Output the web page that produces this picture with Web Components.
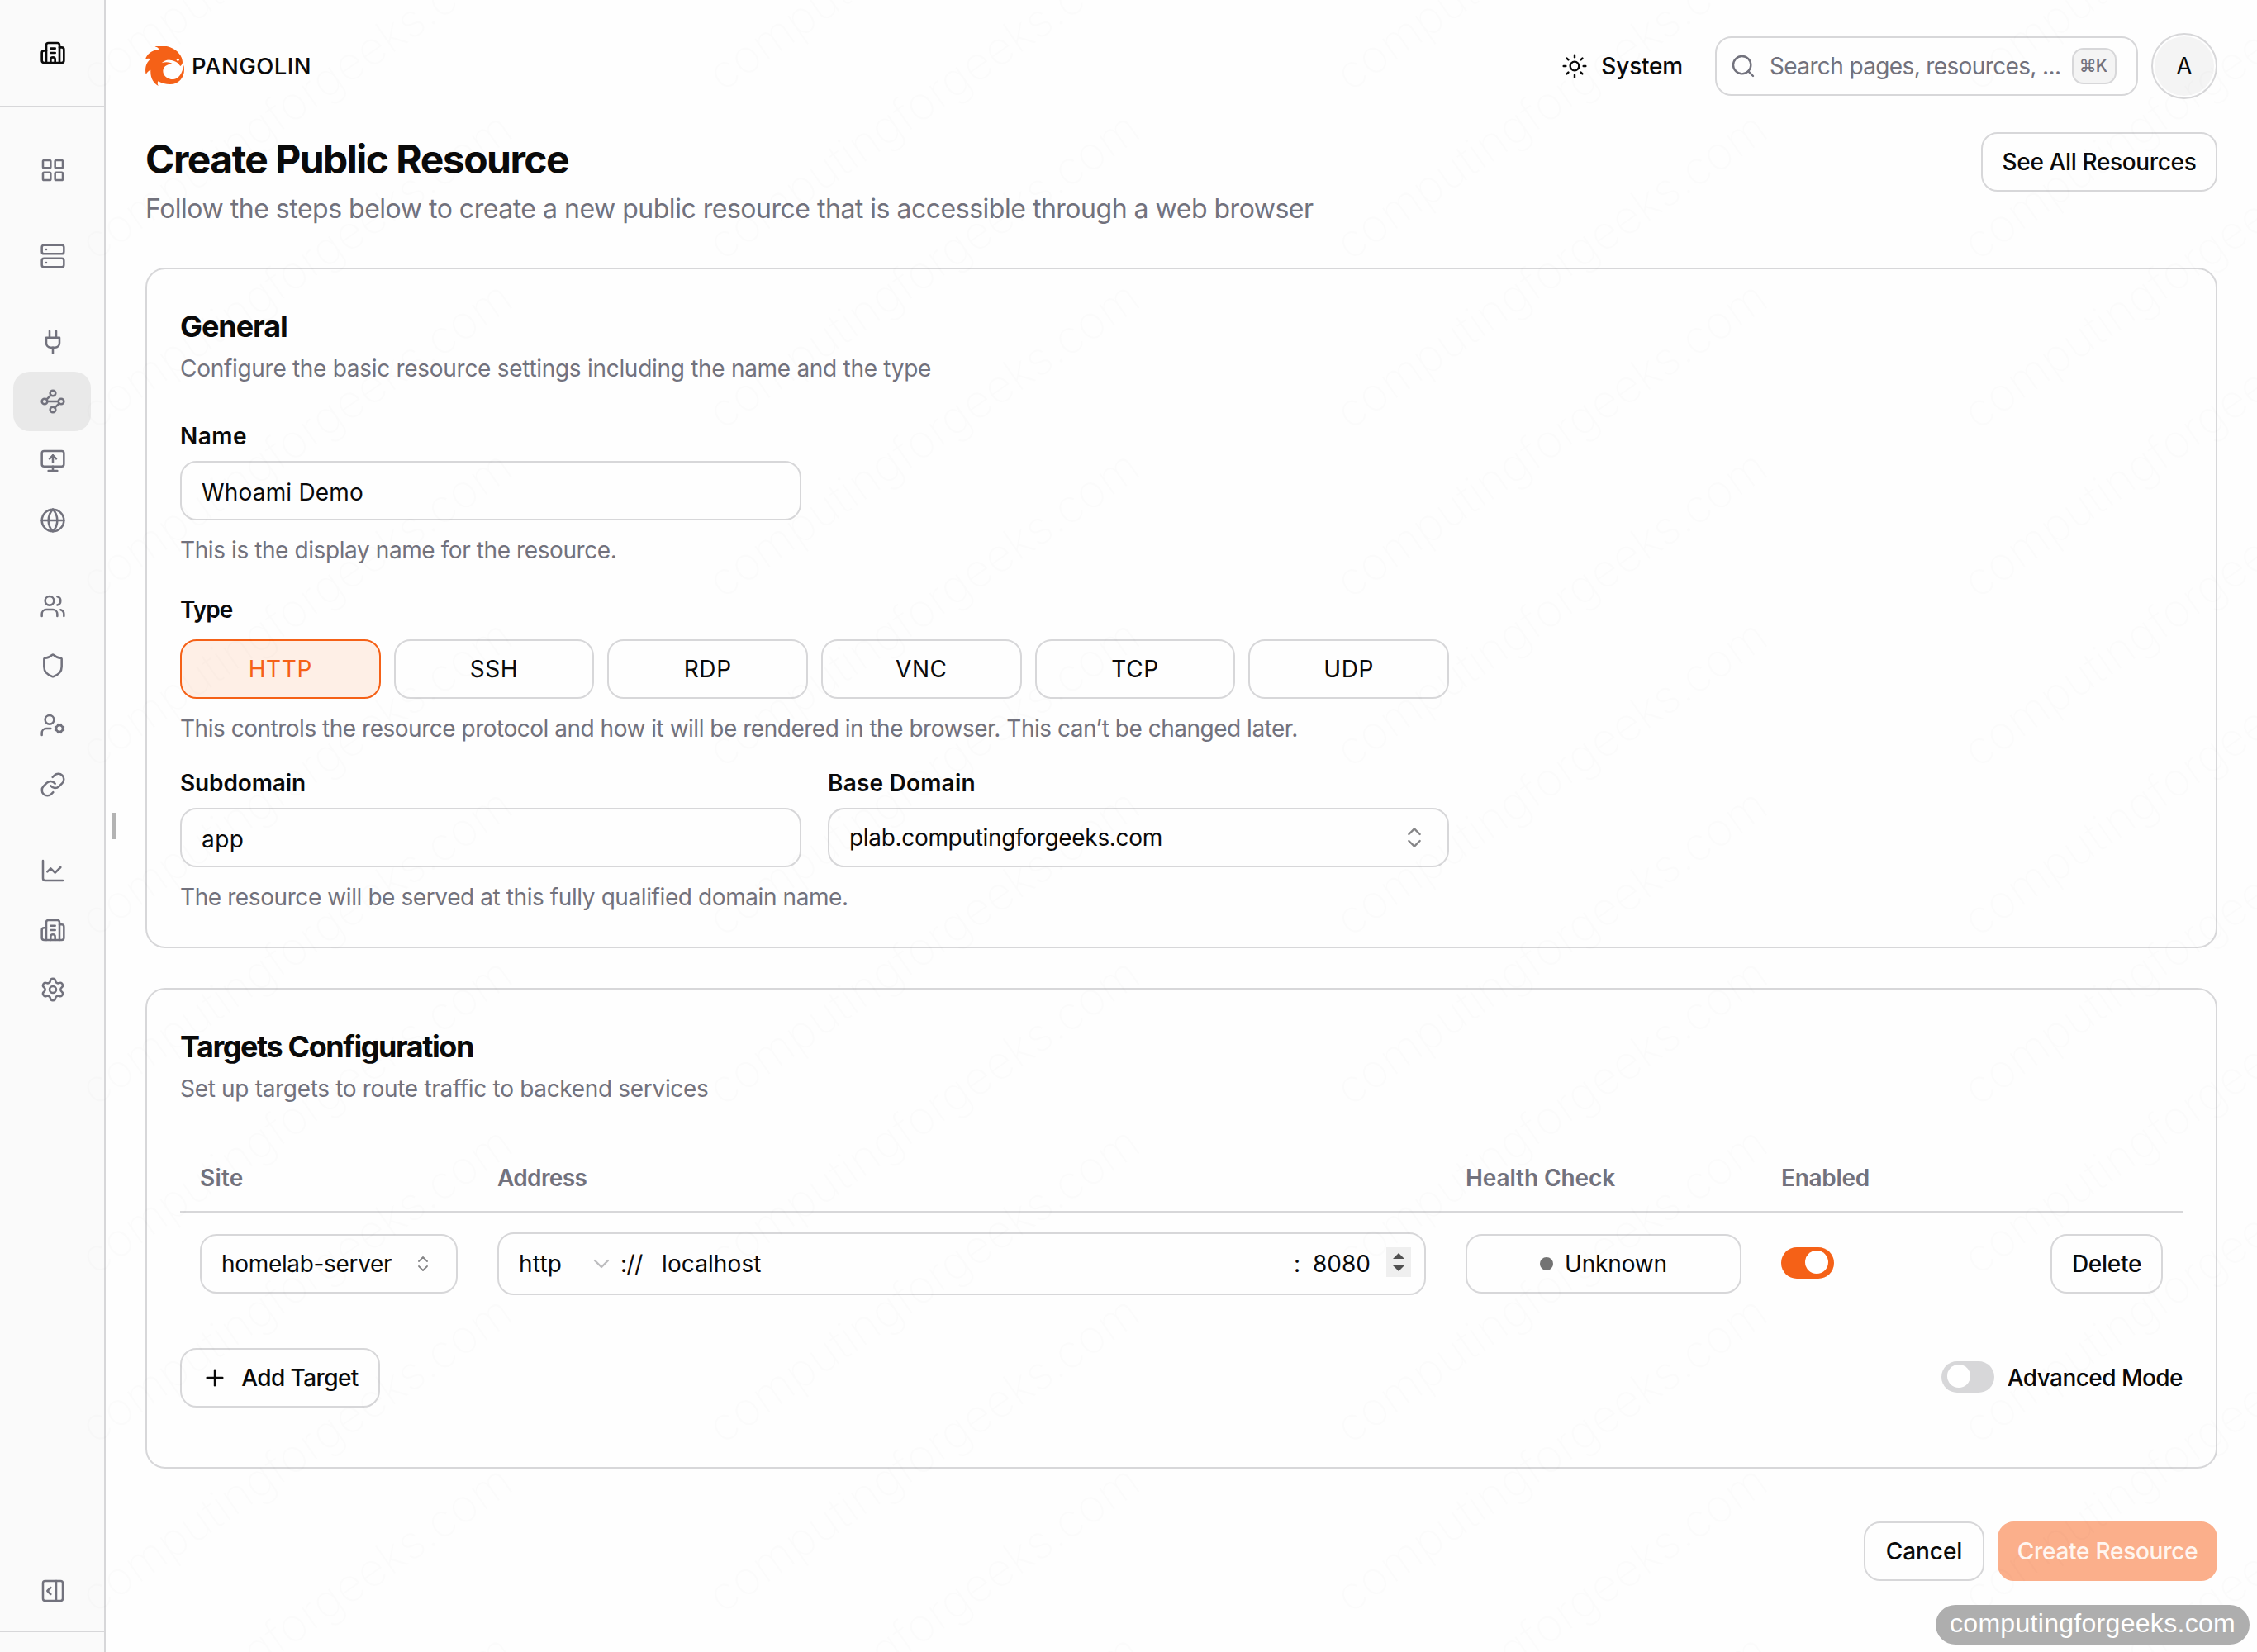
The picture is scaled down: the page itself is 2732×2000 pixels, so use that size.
<!DOCTYPE html>
<html lang="en">
<head>
<meta charset="utf-8">
<title>Pangolin - Create Public Resource</title>
<style>
  :root {
    --fg: #0a0a0a;
    --muted: #72727d;
    --line: #d7d7d9;
    --primary: #f56117;
    --bg: #fefefe;
  }
  html, body { margin: 0; }
  body {
    width: 2732px;
    height: 2000px;
    overflow: hidden;
    position: relative;
    background: var(--bg);
    color: var(--fg);
    font-family: Inter, "Liberation Sans", sans-serif;
    font-size: 28px;
  }
</style>
</head>
<body>
<app-shell></app-shell>

<script>
const ICONS = {
  building: '<path d="M10 12h4"/><path d="M10 8h4"/><path d="M14 21v-3a2 2 0 0 0-4 0v3"/><path d="M6 10H4a2 2 0 0 0-2 2v7a2 2 0 0 0 2 2h16a2 2 0 0 0 2-2V9a2 2 0 0 0-2-2h-2"/><path d="M6 21V5a2 2 0 0 1 2-2h8a2 2 0 0 1 2 2v16"/>',
  grid: '<rect width="7" height="7" x="3" y="3" rx="1"/><rect width="7" height="7" x="14" y="3" rx="1"/><rect width="7" height="7" x="14" y="14" rx="1"/><rect width="7" height="7" x="3" y="14" rx="1"/>',
  server: '<rect width="20" height="8" x="2" y="2" rx="2"/><rect width="20" height="8" x="2" y="14" rx="2"/><path d="M6 6h.01"/><path d="M6 18h.01"/>',
  plug: '<path d="M12 22v-5"/><path d="M9 8V2"/><path d="M15 8V2"/><path d="M18 8v5a4 4 0 0 1-4 4h-4a4 4 0 0 1-4-4V8Z"/>',
  waypoints: '<circle cx="12" cy="4.5" r="2.5"/><path d="m10.2 6.3-3.9 3.9"/><circle cx="4.5" cy="12" r="2.5"/><path d="M7 12h10"/><circle cx="19.5" cy="12" r="2.5"/><path d="m13.8 17.7 3.9-3.9"/><circle cx="12" cy="19.5" r="2.5"/>',
  monitorUp: '<path d="m9 10 3-3 3 3"/><path d="M12 13V7"/><rect width="20" height="14" x="2" y="3" rx="2"/><path d="M12 17v4"/><path d="M8 21h8"/>',
  globe: '<circle cx="12" cy="12" r="10"/><path d="M12 2a14.5 14.5 0 0 0 0 20 14.5 14.5 0 0 0 0-20"/><path d="M2 12h20"/>',
  users: '<path d="M16 21v-2a4 4 0 0 0-4-4H6a4 4 0 0 0-4 4v2"/><path d="M16 3.128a4 4 0 0 1 0 7.744"/><path d="M22 21v-2a4 4 0 0 0-3-3.87"/><circle cx="9" cy="7" r="4"/>',
  shield: '<path d="M20 13c0 5-3.5 7.5-7.66 8.95a1 1 0 0 1-.67-.01C7.5 20.5 4 18 4 13V6a1 1 0 0 1 1-1c2 0 4.5-1.2 6.24-2.72a1.17 1.17 0 0 1 1.52 0C14.51 3.81 17 5 19 5a1 1 0 0 1 1 1z"/>',
  userCog: '<path d="M10 15H6a4 4 0 0 0-4 4v2"/><path d="m14.305 16.53.923-.382"/><path d="m15.228 13.852-.923-.383"/><path d="m16.852 12.228-.383-.923"/><path d="m16.852 17.772-.383.924"/><path d="m19.148 12.228.383-.923"/><path d="m19.53 18.696-.382-.924"/><path d="m20.772 13.852.924-.383"/><path d="m20.772 16.148.924.383"/><circle cx="18" cy="15" r="3"/><circle cx="9" cy="7" r="4"/>',
  link: '<path d="M10 13a5 5 0 0 0 7.54.54l3-3a5 5 0 0 0-7.07-7.07l-1.72 1.71"/><path d="M14 11a5 5 0 0 0-7.54-.54l-3 3a5 5 0 0 0 7.07 7.07l1.71-1.71"/>',
  chart: '<path d="M3 3v16a2 2 0 0 0 2 2h16"/><path d="m19 9-5 5-4-4-3 3"/>',
  settings: '<path d="M9.671 4.136a2.34 2.34 0 0 1 4.659 0 2.34 2.34 0 0 0 3.319 1.915 2.34 2.34 0 0 1 2.33 4.033 2.34 2.34 0 0 0 0 3.831 2.34 2.34 0 0 1-2.33 4.033 2.34 2.34 0 0 0-3.319 1.915 2.34 2.34 0 0 1-4.659 0 2.34 2.34 0 0 0-3.32-1.915 2.34 2.34 0 0 1-2.33-4.033 2.34 2.34 0 0 0 0-3.831A2.34 2.34 0 0 1 6.35 6.051a2.34 2.34 0 0 0 3.319-1.915"/><circle cx="12" cy="12" r="3"/>',
  panel: '<rect width="18" height="18" x="3" y="3" rx="2"/><path d="M15 3v18"/><path d="m10 15-3-3 3-3"/>',
  sun: '<circle cx="12" cy="12" r="4"/><path d="M12 2v2"/><path d="M12 20v2"/><path d="m4.93 4.93 1.41 1.41"/><path d="m17.66 17.66 1.41 1.41"/><path d="M2 12h2"/><path d="M20 12h2"/><path d="m6.34 17.66-1.41 1.41"/><path d="m19.07 4.93-1.41 1.41"/>',
  search: '<circle cx="11" cy="11" r="8"/><path d="m21 21-4.34-4.34"/>',
  updown: '<path d="m7 15 5 5 5-5"/><path d="m7 9 5-5 5 5"/>',
  down: '<path d="m6 9 6 6 6-6"/>',
  plus: '<path d="M5 12h14"/><path d="M12 5v14"/>'
};

// <ui-icon name size stroke>
class UiIcon extends HTMLElement {
  connectedCallback() {
    const size = this.getAttribute("size") || 32;
    const stroke = this.getAttribute("stroke") || 1.5;
    this.attachShadow({ mode: "open" }).innerHTML = `
      <style>
        :host { display: block; flex: none; width: ${size}px; height: ${size}px; }
        svg { display: block; }
      </style>
      <svg width="${size}" height="${size}" viewBox="0 0 24 24" fill="none" stroke="currentColor"
        stroke-width="${stroke}" stroke-linecap="round" stroke-linejoin="round">${ICONS[this.getAttribute("name")]}</svg>
    `;
  }
}
customElements.define("ui-icon", UiIcon);

// <ui-text size weight line track muted>
class UiText extends HTMLElement {
  connectedCallback() {
    const size = this.getAttribute("size") || 28;
    const weight = this.getAttribute("weight") || 400;
    const line = this.getAttribute("line") || 40;
    const track = this.getAttribute("track") || 0;
    this.attachShadow({ mode: "open" }).innerHTML = `
      <style>
        :host {
          display: block;
          white-space: nowrap;
          font-size: ${size}px;
          font-weight: ${weight};
          line-height: ${line}px;
          letter-spacing: ${track}px;
        }
        :host([muted]) { color: var(--muted); }
      </style>
      <slot></slot>
    `;
  }
}
customElements.define("ui-text", UiText);

// outlined box used by buttons, inputs and selects
class UiBox extends HTMLElement {
  connectedCallback() {
    const width = this.getAttribute("width");
    const chevron = this.getAttribute("chevron") || 32;
    this.attachShadow({ mode: "open" }).innerHTML = `
      <style>
        :host {
          display: flex;
          align-items: center;
          box-sizing: border-box;
          width: ${width ? width + "px" : "auto"};
          height: 72px;
          padding: 0 24px;
          border: 2px solid var(--line);
          border-radius: 20px;
        }
        :host([kind="button"]) { justify-content: center; gap: 16px; padding: 0; }
        :host([kind="select"]) { justify-content: space-between; }
        :host([kind="select"][chevron]) { padding-right: 28px; }
        :host([kind="input"]) { padding-top: 3px; }
        :host([active]) { color: var(--primary); border-color: var(--primary); background: #feefe6; }
        :host([primary]) { color: #fff6f0; border-color: #fbaf8b; background: #fbaf8b; }
        ui-icon { color: #858587; }
      </style>
      <slot></slot>
      ${this.getAttribute("kind") === "select" ? `<ui-icon name="updown" size="${chevron}" stroke="1.8"></ui-icon>` : ""}
    `;
  }
}
customElements.define("ui-box", UiBox);

class UiSwitch extends HTMLElement {
  connectedCallback() {
    this.attachShadow({ mode: "open" }).innerHTML = `
      <style>
        :host {
          display: flex;
          flex: none;
          box-sizing: border-box;
          width: 64px;
          height: 38px;
          padding: 4px 7px;
          margin-bottom: 2px;
          border-radius: 19px;
          background: #d7d7d9;
        }
        :host([on]) { justify-content: flex-end; background: var(--primary); }
        i { width: 28px; height: 28px; border-radius: 50%; background: #fff; }
      </style>
      <i></i>
    `;
  }
}
customElements.define("ui-switch", UiSwitch);

class UiCard extends HTMLElement {
  connectedCallback() {
    this.attachShadow({ mode: "open" }).innerHTML = `
      <style>
        :host {
          display: block;
          box-sizing: border-box;
          padding: 48px 40px 40px;
          border: 2px solid var(--line);
          border-radius: 24px;
        }
        .desc { margin: 10px 0 48px; }
      </style>
      <slot name="title"></slot>
      <div class="desc"><slot name="desc"></slot></div>
      <slot></slot>
    `;
  }
}
customElements.define("ui-card", UiCard);

class SideBar extends HTMLElement {
  connectedCallback() {
    const groups = [
      ["grid"],
      ["server"],
      ["plug", "waypoints", "monitorUp", "globe"],
      ["users", "shield", "userCog", "link"],
      ["chart", "building", "settings"]
    ];
    this.attachShadow({ mode: "open" }).innerHTML = `
      <style>
        :host {
          display: flex;
          flex-direction: column;
          box-sizing: border-box;
          width: 128px;
          height: 2000px;
          border-right: 2px solid var(--line);
          background: #fafafa;
          color: var(--muted);
        }
        .top {
          display: flex;
          justify-content: center;
          align-items: center;
          height: 128px;
          padding-left: 2px;
          border-bottom: 2px solid var(--line);
          color: var(--fg);
        }
        nav { display: flex; flex-direction: column; gap: 32px; flex: 1; padding: 40px 16px 0; }
        .item {
          display: flex;
          justify-content: center;
          align-items: center;
          height: 72px;
          padding-left: 2px;
          border-radius: 20px;
        }
        .item.active { background: #e9e9e9; }
        .bottom {
          display: flex;
          justify-content: center;
          align-items: center;
          height: 96px;
          padding-left: 2px;
          border-bottom: 2px solid var(--line);
          margin-bottom: 24px;
        }
      </style>
      <div class="top"><ui-icon name="building" stroke="2"></ui-icon></div>
      <nav>
        ${groups.map(g => `<div>${g.map(n => `<div class="item${n === "waypoints" ? " active" : ""}"><ui-icon name="${n}" stroke="1.9"></ui-icon></div>`).join("")}</div>`).join("")}
      </nav>
      <div class="bottom"><ui-icon name="panel" stroke="1.9"></ui-icon></div>
    `;
  }
}
customElements.define("side-bar", SideBar);

class TopBar extends HTMLElement {
  connectedCallback() {
    this.attachShadow({ mode: "open" }).innerHTML = `
      <style>
        :host { display: flex; align-items: center; justify-content: space-between; height: 80px; }
        .brand, .right, .theme { display: flex; align-items: center; }
        .brand { gap: 8px; }
        .brand svg { display: block; }
        .theme { gap: 16px; margin-right: 39px; }
        .search { margin-right: 16px; color: var(--muted); }
        .search > ui-icon { margin: 0 16px 0 -8px; }
        .search > ui-text { flex: 1; }
        kbd {
          display: flex;
          align-items: center;
          justify-content: center;
          box-sizing: border-box;
          width: 54px;
          height: 44px;
          padding-right: 3px;
          border: 2px solid var(--line);
          border-radius: 14px;
          background: #f4f4f4;
          font-family: inherit;
        }
        .avatar {
          box-sizing: border-box;
          width: 80px;
          height: 80px;
          padding: 2px;
          border: 2px solid var(--line);
          border-radius: 50%;
        }
        .avatar div {
          display: flex;
          align-items: center;
          justify-content: center;
          height: 100%;
          border-radius: 50%;
          background: #f4f4f4;
        }
      </style>
      <div class="brand">
        <svg width="48" height="48" viewBox="18 18 144 144">
          <path fill="#f56117" d="M52 19C68 14 92 15 108 22C136 33 152 54 153 76C153 82 150 86 145 90C138 78 124 69 107 68C96 67 86 71 77 79C92 73 110 75 121 85C104 80 84 88 82 107C82 126 101 139 120 138C138 136 153 116 157 86C166 124 144 156 108 156C92 156 76 152 64 145C61 151 62 156 65 162C48 152 35 134 37 104C28 108 22 114 20 121C15 100 20 76 38 64C30 61 24 62 18 66C22 48 40 32 68 29C64 23 58 20 52 19Z"/>
          <circle cx="136" cy="67" r="4.5" fill="#fff"/>
        </svg>
        <ui-text size="27.5" weight="500" track="0.45">PANGOLIN</ui-text>
      </div>
      <div class="right">
        <div class="theme"><ui-icon name="sun" stroke="1.8"></ui-icon><ui-text weight="500" track="-0.2">System</ui-text></div>
        <ui-box class="search" width="512">
          <ui-icon name="search" stroke="1.8"></ui-icon>
          <ui-text track="-0.63">Search pages, resources, ...</ui-text>
          <kbd><ui-text size="21" line="40" weight="500" track="-0.8">⌘K</ui-text></kbd>
        </ui-box>
        <div class="avatar"><div><ui-text weight="400">A</ui-text></div></div>
      </div>
    `;
  }
}
customElements.define("top-bar", TopBar);

class GeneralForm extends HTMLElement {
  connectedCallback() {
    const types = ["HTTP", "SSH", "RDP", "VNC", "TCP", "UDP"];
    this.attachShadow({ mode: "open" }).innerHTML = `
      <style>
        :host { display: block; width: 1536px; }
        .cols { display: grid; grid-template-columns: 1fr 1fr; column-gap: 32px; }
        .field { display: flex; flex-direction: column; gap: 16px; }
        .type { margin: 38px 0 32px; }
        .types { display: grid; grid-template-columns: repeat(6, 1fr); gap: 16px; margin-top: 6px; }
        .help { margin-top: 16px; }
      </style>
      <div class="cols">
        <div class="field">
          <ui-text weight="600" line="28" track="0.5">Name</ui-text>
          <ui-box kind="input"><ui-text track="0.18">Whoami Demo</ui-text></ui-box>
          <ui-text muted track="-0.41">This is the display name for the resource.</ui-text>
        </div>
      </div>
      <div class="field type">
        <ui-text weight="600" line="28" track="-1">Type</ui-text>
        <div class="types">
          ${types.map((t, i) => `<ui-box kind="button"${i ? "" : " active"}><ui-text track="0.6">${t}</ui-text></ui-box>`).join("")}
        </div>
        <ui-text muted track="-0.485">This controls the resource protocol and how it will be rendered in the browser. This can’t be changed later.</ui-text>
      </div>
      <div class="cols">
        <div class="field">
          <ui-text weight="600" line="28" track="-0.12">Subdomain</ui-text>
          <ui-box kind="input"><ui-text track="0.5">app</ui-text></ui-box>
        </div>
        <div class="field">
          <ui-text weight="600" line="28" track="0.2">Base Domain</ui-text>
          <ui-box kind="select"><ui-text track="-0.32">plab.computingforgeeks.com</ui-text></ui-box>
        </div>
      </div>
      <ui-text class="help" muted track="-0.41">The resource will be served at this fully qualified domain name.</ui-text>
    `;
  }
}
customElements.define("general-form", GeneralForm);

class TargetTable extends HTMLElement {
  connectedCallback() {
    this.attachShadow({ mode: "open" }).innerHTML = `
      <style>
        :host { display: block; padding-bottom: 32px; }
        .row {
          display: grid;
          grid-template-columns: 312px 1124px 334px 1fr auto;
          column-gap: 48px;
          align-items: center;
          padding: 24px;
        }
        .head { height: 80px; padding: 0 24px; border-bottom: 2px solid var(--line); }
        .address { height: 76px; padding-right: 16px; }
        .scheme { width: 84px; }
        .address ui-icon { color: #bdbdbf; }
        .sep { width: 50px; margin-left: 7px; }
        .host { flex: 1; }
        .colon { width: 23px; }
        .port { width: 89px; }
        .spin {
          display: flex;
          flex-direction: column;
          align-items: center;
          justify-content: center;
          gap: 8px;
          width: 30px;
          height: 36px;
          margin-bottom: 4px;
          background: #efefef;
        }
        .spin i { border: 7px solid transparent; border-top: 0; border-bottom-color: #505050; }
        .spin i + i { transform: rotate(180deg); }
        .dot { width: 16px; height: 16px; border-radius: 50%; background: #737373; }
        .unknown { gap: 14px; }
        .actions { display: flex; justify-content: space-between; align-items: center; margin-top: 40px; }
        .advanced { display: flex; align-items: center; gap: 16px; }
      </style>
      <div class="row head">
        <ui-text muted weight="600" track="0.2">Site</ui-text>
        <ui-text muted weight="600" track="-0.65">Address</ui-text>
        <ui-text muted weight="600" track="-0.1">Health Check</ui-text>
        <ui-text muted weight="600" track="-0.3">Enabled</ui-text>
      </div>
      <div class="row">
        <ui-box kind="select" chevron="24"><ui-text track="-0.33">homelab-server</ui-text></ui-box>
        <ui-box class="address">
          <ui-text class="scheme" track="0.2">http</ui-text>
          <ui-icon name="down" stroke="1.8"></ui-icon>
          <ui-text class="sep" track="-0.5">://</ui-text>
          <ui-text class="host" track="0.1">localhost</ui-text>
          <ui-text class="colon">:</ui-text>
          <ui-text class="port">8080</ui-text>
          <div class="spin"><i></i><i></i></div>
        </ui-box>
        <ui-box kind="button" class="unknown"><span class="dot"></span><ui-text track="-0.15">Unknown</ui-text></ui-box>
        <ui-switch on></ui-switch>
        <ui-box kind="button" width="136"><ui-text weight="500" track="-0.28">Delete</ui-text></ui-box>
      </div>
      <div class="actions">
        <ui-box kind="button" width="242"><ui-icon name="plus" stroke="1.8"></ui-icon><ui-text weight="500" track="-0.6">Add Target</ui-text></ui-box>
        <div class="advanced"><ui-switch></ui-switch><ui-text weight="500" track="-0.54">Advanced Mode</ui-text></div>
      </div>
    `;
  }
}
customElements.define("target-table", TargetTable);

// faint diagonal site name repeated over the whole page
class PageStamp extends HTMLElement {
  connectedCallback() {
    let marks = "";
    for (let col = 0; col < 4; col++) {
      for (let row = 0; row < 12; row++) {
        marks += `<text transform="translate(${115 + col * 759.6} ${112 + row * 204.7}) rotate(-35)">computingforgeeks.com</text>`;
      }
    }
    this.attachShadow({ mode: "open" }).innerHTML = `
      <style>
        :host { position: absolute; inset: 0; overflow: hidden; pointer-events: none; }
        text { font: 200 56px Inter, sans-serif; fill: #000; fill-opacity: .012; }
        span {
          position: absolute;
          right: 9px;
          bottom: 9px;
          box-sizing: border-box;
          width: 380px;
          height: 48px;
          border-radius: 24px;
          background: #aeaeae;
          color: #fff;
          font: 32px/45px "Liberation Sans", sans-serif;
          letter-spacing: .3px;
          text-align: center;
        }
      </style>
      <svg width="2732" height="2000" aria-hidden="true">${marks}</svg>
      <span>computingforgeeks.com</span>
    `;
  }
}
customElements.define("page-stamp", PageStamp);

class AppShell extends HTMLElement {
  connectedCallback() {
    this.attachShadow({ mode: "open" }).innerHTML = `
      <style>
        :host { display: flex; height: 2000px; }
        .handle { align-self: center; flex: none; width: 4px; height: 32px; margin: 0 36px 0 8px; background: #b3b3b3; }
        main { width: 2508px; padding-top: 40px; }
        .title { display: flex; justify-content: space-between; align-items: flex-start; height: 116px; margin: 40px 0 48px; }
        .title div { display: flex; flex-direction: column; gap: 4px; padding-top: 1px; }
        ui-card + ui-card { margin-top: 48px; }
        .footer { display: flex; justify-content: flex-end; gap: 16px; margin-top: 64px; }
      </style>
      <side-bar></side-bar>
      <div class="handle"></div>
      <main>
        <top-bar></top-bar>
        <div class="title">
          <div>
            <ui-text size="48" weight="700" line="64" track="-1.53">Create Public Resource</ui-text>
            <ui-text size="32" line="48" track="-0.486" muted>Follow the steps below to create a new public resource that is accessible through a web browser</ui-text>
          </div>
          <ui-box kind="button" width="286"><ui-text weight="500" track="-0.36">See All Resources</ui-text></ui-box>
        </div>
        <ui-card>
          <ui-text slot="title" size="36" weight="700" line="42" track="-1.06">General</ui-text>
          <ui-text slot="desc" muted track="-0.294">Configure the basic resource settings including the name and the type</ui-text>
          <general-form></general-form>
        </ui-card>
        <ui-card>
          <ui-text slot="title" size="36" weight="700" line="42" track="-1.43">Targets Configuration</ui-text>
          <ui-text slot="desc" muted track="-0.32">Set up targets to route traffic to backend services</ui-text>
          <target-table></target-table>
        </ui-card>
        <div class="footer">
          <ui-box kind="button" width="146"><ui-text weight="500" track="-0.08">Cancel</ui-text></ui-box>
          <ui-box kind="button" width="266" primary><ui-text weight="500" track="-0.26">Create Resource</ui-text></ui-box>
        </div>
      </main>
      <page-stamp></page-stamp>
    `;
  }
}
customElements.define("app-shell", AppShell);
</script>
</body>
</html>
